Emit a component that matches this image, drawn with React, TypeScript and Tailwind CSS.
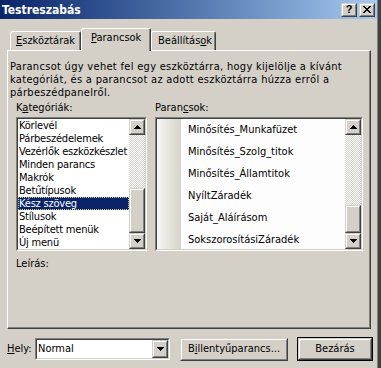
import React from "react";

const font = "font-['DejaVu_Sans_Condensed','Liberation_Sans',sans-serif]";

const Arrow = ({ down }: { down?: boolean }) => (
    <svg width="7" height="4" viewBox="0 0 7 4" shapeRendering="crispEdges" className={down ? "rotate-180" : ""}>
        <path d="M3 0h1v1h-1z M2 1h3v1h-3z M1 2h5v1h-5z M0 3h7v1h-7z" fill="#000" />
    </svg>
);

const Raised = ({ className, children }: { className?: string; children?: React.ReactNode }) => (
    <div className={"border border-t-[#d4d0c8] border-l-[#d4d0c8] border-r-[#404040] border-b-[#404040] bg-[#d4d0c8] " + (className || "")}>
        <div className="w-full h-full border border-t-white border-l-white border-r-[#808080] border-b-[#808080] flex items-center justify-center">
            {children}
        </div>
    </div>
);

const Sunken = ({ className, children }: { className?: string; children?: React.ReactNode }) => (
    <div className={"border border-t-[#808080] border-l-[#808080] border-r-white border-b-white " + (className || "")}>
        <div className="w-full h-full border border-t-[#404040] border-l-[#404040] border-r-[#d4d0c8] border-b-[#d4d0c8] flex overflow-hidden">
            {children}
        </div>
    </div>
);

const ScrollBar = ({ spacer }: { spacer: string }) => (
    <div className="w-[16px] h-full flex flex-col shrink-0">
        <Raised className="w-[16px] h-[16px] shrink-0">
            <Arrow />
        </Raised>
        <div className="flex-1 flex flex-col bg-[repeating-conic-gradient(#d4d0c8_0_25%,#ffffff_0_50%)] bg-[length:2px_2px]">
            <div className={spacer + " shrink-0"} />
            <Raised className="flex-1 w-[16px]" />
        </div>
        <Raised className="w-[16px] h-[16px] shrink-0">
            <Arrow down />
        </Raised>
    </div>
);

const categories = [
    "Körlevél",
    "Párbeszédelemek",
    "Vezérlők eszközkészlet",
    "Minden parancs",
    "Makrók",
    "Betűtípusok",
    "Kész szöveg",
    "Stílusok",
    "Beépített menük",
    "Új menü",
];

const commands = [
    "Minősítés_Munkafüzet",
    "Minősítés_Szolg_titok",
    "Minősítés_Államtitok",
    "NyíltZáradék",
    "Saját_Aláírásom",
    "SokszorosításiZáradék",
];

export default function App() {
    return (
        <div className={"w-[381px] h-[368px] bg-[#d4d0c8] flex overflow-hidden text-[11px] text-black " + font}>
            <div className="w-[377px] flex flex-col">
                {/* title bar */}
                <div className="h-[19px] shrink-0 bg-linear-to-r from-[#0a246a] to-[#a6caf0] flex items-center pl-[2px] pr-[2px]">
                    <span className="text-white font-bold text-[12px] leading-none flex-1">Testreszabás</span>
                    <Raised className="w-[16px] h-[14px]">
                        <span className="font-bold text-[11px] leading-none font-['Liberation_Sans',sans-serif]">?</span>
                    </Raised>
                    <Raised className="w-[16px] h-[14px] ml-[2px]">
                        <svg width="8" height="7" viewBox="0 0 8 7" shapeRendering="crispEdges">
                            <path d="M0 0h2v1h-2z M6 0h2v1h-2z M1 1h2v1h-2z M5 1h2v1h-2z M2 2h4v1h-4z M3 3h2v1h-2z M2 4h4v1h-4z M1 5h2v1h-2z M5 5h2v1h-2z M0 6h2v1h-2z M6 6h2v1h-2z" fill="#000" />
                        </svg>
                    </Raised>
                </div>

                {/* tabs */}
                <div className="h-[22px] mt-[9px] shrink-0 flex items-end pl-[10px]">
                    <div className="w-[71px] h-[19px] border-t border-l border-t-white border-l-white border-r border-r-[#404040] rounded-tl-[3px] rounded-tr-[2px]">
                        <div className="h-full border-r border-r-[#808080] flex items-center pl-[5px]">
                            <span><u>E</u>szköztárak</span>
                        </div>
                    </div>
                    <div className="w-[70px] h-[23px] -mb-[1px] relative z-10 bg-[#d4d0c8] border-t border-l border-t-white border-l-white border-r border-r-[#404040] rounded-tl-[3px] rounded-tr-[2px]">
                        <div className="h-full border-r border-r-[#808080] flex items-center pl-[9px] pb-[3px]">
                            <span><u>P</u>arancsok</span>
                        </div>
                    </div>
                    <div className="w-[65px] h-[19px] border-t border-l border-t-white border-l-white border-r border-r-[#404040] rounded-tl-[2px] rounded-tr-[3px]">
                        <div className="h-full border-r border-r-[#808080] flex items-center pl-[6px]">
                            <span>Beállítás<u>o</u>k</span>
                        </div>
                    </div>
                </div>

                {/* panel */}
                <div className="ml-[7px] w-[364px] h-[279px] shrink-0 border border-t-white border-l-white border-r-[#404040] border-b-[#404040]">
                    <div className="w-full h-full border-r border-b border-r-[#808080] border-b-[#808080] flex flex-col pt-[9px]">
                        <div className="pl-[2px] leading-[13px] whitespace-nowrap tracking-[0.3px]">
                            Parancsot úgy vehet fel egy eszköztárra, hogy kijelölje a kívánt
                            <br />
                            kategóriát, és a parancsot az adott eszköztárra húzza erről a
                            <br />
                            párbeszédpanelről.
                        </div>

                        <div className="flex gap-[8px] ml-[8px] mt-[2px]">
                            <div className="w-[131px] flex flex-col">
                                <div className="leading-[13px]">
                                    K<u>a</u>tegóriák:
                                </div>
                                <Sunken className="mt-[3px] h-[134px]">
                                    <div className="flex-1 flex flex-col bg-white min-w-0 tracking-[-0.2px]">
                                        {categories.map((c) => (
                                            <div
                                                key={c}
                                                className={
                                                    c === "Kész szöveg"
                                                        ? "h-[13px] leading-[11px] pl-[0px] bg-[#0a246a] text-white whitespace-nowrap border border-dotted border-[#d8d080]"
                                                        : "h-[13px] leading-[13px] pl-[1px] whitespace-nowrap"
                                                }
                                            >
                                                {c}
                                            </div>
                                        ))}
                                    </div>
                                    <ScrollBar spacer="h-[53px]" />
                                </Sunken>
                            </div>

                            <div className="w-[208px] flex flex-col">
                                <div className="leading-[13px]">
                                    Paran<u>c</u>sok:
                                </div>
                                <Sunken className="mt-[3px] h-[134px]">
                                    <div className="flex-1 flex bg-[#fdfdfd] min-w-0">
                                        <div className="w-[24px] shrink-0 bg-linear-to-r from-[#f8f7f4] to-[#d6d3cb]" />
                                        <div className="flex-1 flex flex-col pl-[7px]">
                                            {commands.map((c) => (
                                                <div key={c} className="h-[22px] shrink-0 flex items-center whitespace-nowrap">
                                                    {c}
                                                </div>
                                            ))}
                                        </div>
                                    </div>
                                    <ScrollBar spacer="h-[70px]" />
                                </Sunken>
                            </div>
                        </div>

                        <div className="ml-[8px] mt-[6px] leading-[13px]">Leírás:</div>
                    </div>
                </div>

                {/* bottom row */}
                <div className="mt-[8px] h-[24px] flex items-center shrink-0">
                    <span className="ml-[7px] w-[28px]">
                        <u>H</u>ely:
                    </span>
                    <Sunken className="w-[135px] h-[22px]">
                        <div className="flex-1 bg-white flex items-center pl-[1px]">Normal</div>
                        <Raised className="w-[16px] h-full shrink-0">
                            <Arrow down />
                        </Raised>
                    </Sunken>
                    <Raised className="ml-[10px] w-[108px] h-[23px]">
                        <span>
                            B<u>i</u>llentyűparancs...
                        </span>
                    </Raised>
                    <div className="ml-[9px] w-[76px] h-[24px] border border-black">
                        <Raised className="w-full h-full">
                            <span>Bezárás</span>
                        </Raised>
                    </div>
                </div>
            </div>
            <div className="w-[1px] h-full bg-[#808080]" />
            <div className="w-[3px] h-full bg-[#404040]" />
        </div>
    );
}
